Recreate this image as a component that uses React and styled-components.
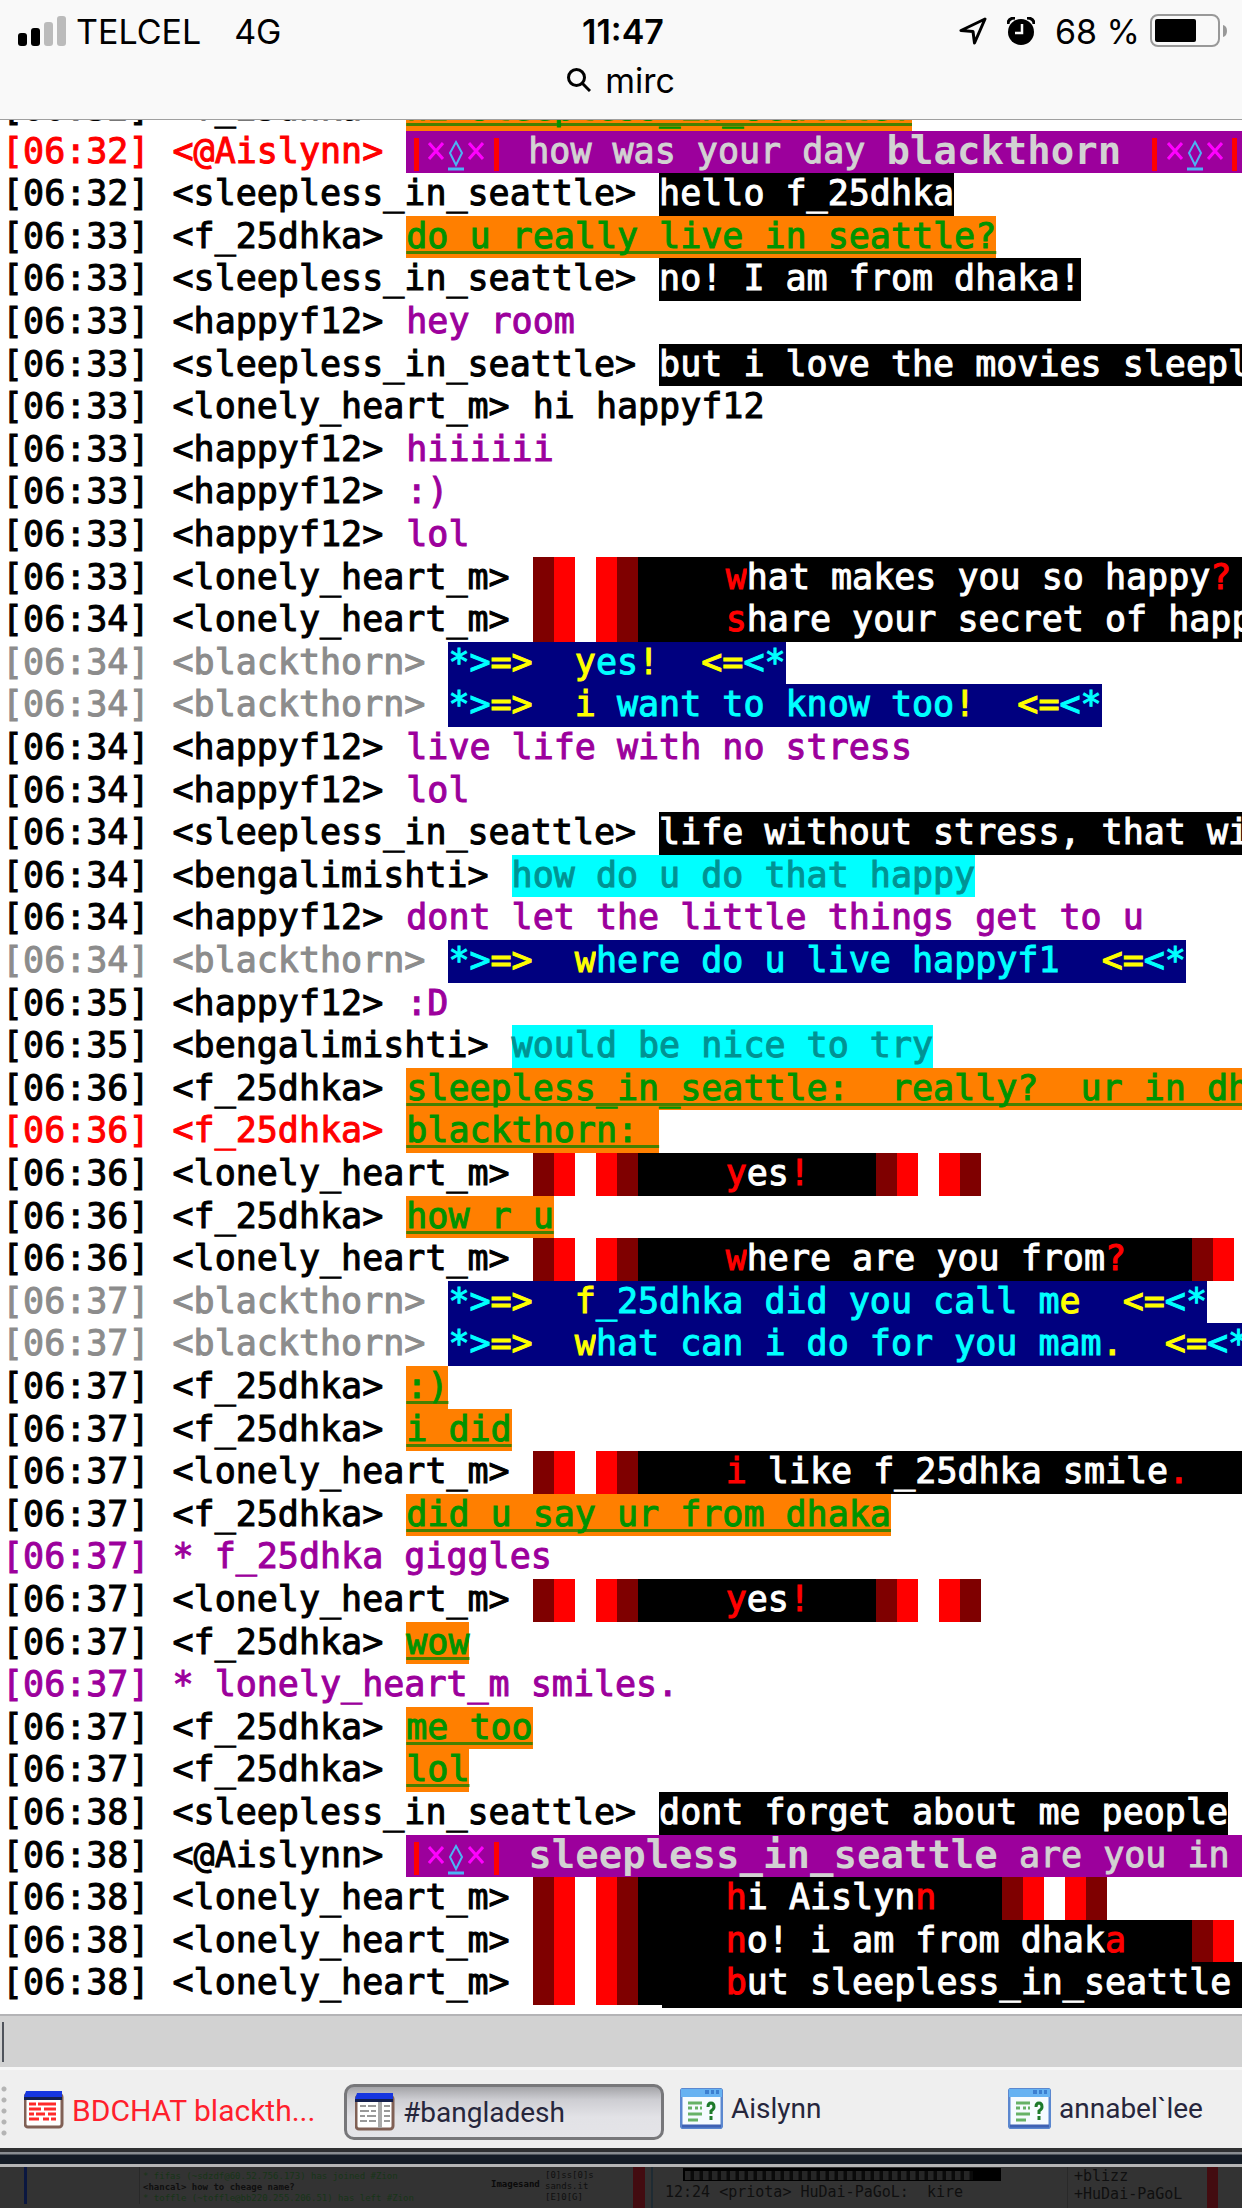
import React from "react";
import styled, { createGlobalStyle, css } from "styled-components";

const GlobalStyle = createGlobalStyle`
  *, *::before, *::after { box-sizing: border-box; }
  body { margin: 0; background: #333333; overflow-x: hidden; }
`;

const uiFont = css`font-family: Inter, "Liberation Sans", sans-serif;`;
const monoFont = css`font-family: "DejaVu Sans Mono", "Liberation Mono", monospace;`;

const Page = styled.main`
  display: flex;
  flex-direction: column;
  width: 100%;
  overflow: hidden;
  background: #ffffff;
`;

const Header = styled.header`
  ${uiFont}
  height: 120px;
  background: #f9f9f9;
  border-bottom: 1px solid #a0a0a0;
  color: #000000;
`;

const StatusBar = styled.div`
  display: grid;
  grid-template-columns: 1fr auto 1fr;
  align-items: center;
  height: 62px;
  padding: 0 14px 0 18px;
  font-size: 34px;
`;

const StatusGroup = styled.div`
  display: flex;
  align-items: center;
  justify-content: ${(p) => (p.$end ? "flex-end" : "flex-start")};
  gap: ${(p) => (p.$end ? "20px" : "9px")};
  white-space: pre;
`;

const Network = styled.span`
  margin-left: 24px;
`;

const Battery = styled.span`
  display: flex;
  align-items: center;
  gap: 10px;
`;

const Clock = styled.time`
  font-weight: 600;
`;

const ReturnLink = styled.a`
  display: flex;
  align-items: center;
  justify-content: center;
  gap: 14px;
  height: 36px;
  font-size: 34px;
  color: #000000;
  text-decoration: none;
`;

const Log = styled.ol`
  ${monoFont}
  list-style: none;
  margin: 0;
  padding: 0 0 0 2px;
  overflow: hidden;
  font-size: 35px;
  line-height: 40px;
  -webkit-text-stroke: 1px currentColor;
`;

const Line = styled.li`
  display: flex;
  height: 43px;
  gap: 23px;
  white-space: pre;
  color: ${(p) => p.$color || "#000000"};
  &:first-child {
    margin-top: -32px;
  }
  &:nth-child(5n + 2),
  &:nth-child(5n + 4) {
    height: 42px;
  }
`;

const Message = styled.span`
  display: flex;
`;

const Run = styled.span`
  flex: none;
  color: ${(p) => p.$color};
  background: ${(p) => p.$bg};
`;

const Underlined = styled(Run)`
  text-decoration: underline 3px #468000;
  text-underline-offset: 3px;
  text-decoration-skip-ink: none;
`;

const Strong = styled.strong`
  flex: none;
  font-size: 39px;
  -webkit-text-stroke: 0;
  color: #d2d2d2;
  background: #9c009c;
`;

const Stripe = styled.span`
  flex: none;
  width: 21px;
  background: ${(p) => p.$color};
`;

const Pad = styled.span`
  flex: none;
  width: ${(p) => p.$width}px;
  background: #000000;
`;

const Ornament = styled.span`
  display: grid;
  flex: none;
  grid-template-columns: repeat(5, 20px);
  justify-items: center;
  padding-right: 22px;
  background: #9c009c;
`;

const Bar = styled.span`
  width: 5px;
  height: 33px;
  margin-top: 7px;
  background: #ff0000;
`;

const NextLine = styled.div`
  height: 9px;
  padding-left: 662px;
  &::before {
    content: "";
    display: block;
    height: 3px;
    background: #000000;
  }
`;

const Composer = styled.label`
  display: flex;
  align-items: center;
  height: 56px;
  border-top: 2px solid #b4b4b6;
  border-bottom: 3px solid #f6f6f6;
  background: #d2d2d2;
`;

const Caret = styled.span`
  width: 2px;
  height: 40px;
  margin-left: 2px;
  background: #50545c;
`;

const Entry = styled.input`
  ${monoFont}
  flex: 1;
  min-width: 0;
  height: 100%;
  padding: 0;
  border: 0;
  outline: 0;
  background: transparent;
  font-size: 35px;
`;

const SwitchBar = styled.nav`
  display: flex;
  height: 78px;
  padding: 14px 0 8px;
  background: #efefef;
`;

const Grip = styled.span`
  flex: none;
  width: 16px;
  height: 52px;
  background: radial-gradient(circle at 4px 5px, #b4b4b4 2px, transparent 3px) 0 0 / 16px 11px repeat-y;
`;

const Tabs = styled.div`
  display: grid;
  flex: none;
  grid-template-columns: repeat(4, 320px);
  gap: 8px;
`;

const Tab = styled.button`
  display: flex;
  align-items: center;
  gap: 8px;
  padding: 0 8px 8px;
  border: 2px solid transparent;
  border-width: 2px 0;
  border-radius: 10px;
  background: transparent;
  font-family: Roboto, "Liberation Sans", sans-serif;
  font-size: 28px;
  color: #26263c;
  text-align: left;
  white-space: nowrap;
  ${(p) => p.$alert && css`
    color: #ff1f2d;
    font-size: 30px;
    padding-bottom: 4px;
  `}
  ${(p) => p.$active && css`
    padding-bottom: 0;
    border: 3px solid #77777a;
    background: linear-gradient(#a4a4a8, #cdcdd2 25%, #e2e2e6 60%, #e4e4e8);
  `}
`;

const WindowEdge = styled.div`
  height: 19px;
  border-top: 4px solid #2f3032;
  border-bottom: 3px solid #b5b5b5;
  background: linear-gradient(#8a8d91 0 2px, #151c26 3px);
`;

const Backdrop = styled.footer`
  ${monoFont}
  display: flex;
  height: 41px;
  overflow: hidden;
  padding-left: 24px;
  background: #333333;
  font-size: 9px;
  line-height: 11px;
  color: #0f0f0f;
  white-space: pre;
`;

const Channel = styled.div`
  flex: none;
  width: 609px;
  height: 37px;
  display: flex;
  border-left: 3px solid #0b1740;
`;

const ChannelLog = styled.div`
  flex: none;
  width: 352px;
  margin-left: 112px;
  padding: 4px 0 0 3px;
  border-left: 1px solid #292929;
  color: #173517;
`;

const Spoken = styled.div`
  color: #0f0f0f;
  font-weight: bold;
`;

const Watermark = styled.div`
  flex: none;
  width: 54px;
  padding-top: 12px;
  color: #0a0a0a;
  font-weight: bold;
`;

const Names = styled.div`
  padding-top: 3px;
`;

const SecondWindow = styled.div`
  display: flex;
  flex: none;
  width: 585px;
  border: solid #430c10;
  border-width: 0 11px 0 12px;
  font-size: 15px;
  line-height: 18px;
`;

const PriotaLog = styled.div`
  flex: none;
  width: 416px;
  padding-left: 12px;
  border-left: 2px solid #1f2b33;
  margin-left: 6px;
`;

const Selection = styled.div`
  width: 318px;
  height: 13px;
  margin: 1px 0 2px 18px;
  background: repeating-linear-gradient(90deg, #262626 0 5px, #0a0a0a 6px 9px) 2px 3px / 288px 9px no-repeat #000000;
`;

const Nicks = styled.div`
  padding-left: 6px;
  border-left: 1px solid #292929;
  flex: 1;
`;

const SignalIcon = () => (
  <svg width="49" height="30" viewBox="0 0 49 30" aria-label="Signal">
    <rect x="0" y="17" width="9" height="13" rx="3" />
    <rect x="13" y="12" width="9" height="18" rx="3" />
    <rect x="26" y="6" width="9" height="24" rx="3" fill="#bbbbbb" />
    <rect x="39" y="0" width="9" height="30" rx="3" fill="#bbbbbb" />
  </svg>
);

const LocationIcon = () => (
  <svg width="28" height="28" viewBox="0 0 28 28" fill="none" stroke="#000" strokeWidth="3" strokeLinejoin="round">
    <path d="M26 2 2 13.500 14 14.500 15.500 26Z" />
  </svg>
);

const AlarmIcon = () => (
  <svg width="28" height="28" viewBox="0 0 28 28">
    <circle cx="14" cy="15" r="13" />
    <path d="M1 7Q1 1 8 1M27 7Q27 1 20 1" fill="none" stroke="#000" strokeWidth="3" />
    <path d="M15 7v9H8" fill="none" stroke="#f9f9f9" strokeWidth="2.500" />
  </svg>
);

const BatteryIcon = () => (
  <svg width="78" height="34" viewBox="0 0 78 34" aria-label="Battery">
    <rect x="1" y="1" width="68" height="31" rx="7" fill="none" stroke="#999" strokeWidth="2" />
    <rect x="5" y="5" width="41" height="23" rx="2" />
    <path d="M73 11q4 1 4 6t-4 6z" fill="#999" />
  </svg>
);

const SearchIcon = () => (
  <svg width="24" height="24" viewBox="0 0 24 24" fill="none" stroke="#000" strokeWidth="3">
    <circle cx="9.500" cy="9.500" r="8" />
    <path d="M15 15l8 8" />
  </svg>
);

const Lozenge = () => (
  <svg width="18" height="40" viewBox="0 0 18 40" fill="none" stroke="#4cb4f4" strokeWidth="2">
    <path d="M9 11 15 22 9 34 3 22Z" />
    <path d="M1 38h16" strokeWidth="3" />
  </svg>
);

const Cross = () => (
  <svg width="16" height="40" viewBox="0 0 16 40" stroke="#ff00ff" strokeWidth="3">
    <path d="M1 12 15 28M15 12 1 28" />
  </svg>
);

const StatusWindowIcon = () => (
  <svg width="40" height="38" viewBox="0 0 40 38">
    <rect x="1" y="3" width="37" height="33" rx="3" fill="#fff" stroke="#806055" strokeWidth="3" />
    <path d="M2 0h36v6H0z" fill="#1636e0" />
    <path d="M0 6h38v3H0z" fill="#14204e" />
    <path d="M5 13h7m2 0h18M5 18h12m3 0h12M5 23h5m2 0h9m3 0h8M5 28h10m4 0h6m2 0h5" stroke="#ff2a2a" strokeWidth="3" />
  </svg>
);

const ChannelWindowIcon = () => (
  <svg width="40" height="38" viewBox="0 0 40 38">
    <rect x="1" y="3" width="37" height="33" rx="3" fill="#fff" stroke="#806055" strokeWidth="3" />
    <path d="M2 0h36v6H0z" fill="#1636e0" />
    <path d="M0 6h38v3H0z" fill="#14204e" />
    <path d="M23 9h4v26h-4z" fill="#aaa" />
    <path d="M5 13h6m2 0h8M5 18h9m2 0h5M5 23h5m2 0h9M5 28h7m2 0h7M29 13h6M29 18h6M29 23h6M29 28h6" stroke="#999" strokeWidth="2" />
  </svg>
);

const QueryWindowIcon = () => (
  <svg width="43" height="41" viewBox="0 0 43 41">
    <rect x="1" y="1" width="41" height="39" rx="3" fill="#f6fbff" stroke="#5b87cf" strokeWidth="3" />
    <path d="M1 1h41v8H1z" fill="#66b2f2" />
    <path d="M25 4h4m2 0h3m2 0h3" stroke="#3c7fd0" strokeWidth="4" />
    <path d="M2 38h39" stroke="#3f62b4" strokeWidth="3" />
    <path d="M8 15h14M8 20h4m3 0h3m2 0h2M8 26h14M8 32h10" stroke="#67b267" strokeWidth="3" />
    <path d="M28 19q0-4 3-4t3 4q0 2-3 4v3M31 28v4" fill="none" stroke="#1d7a2b" strokeWidth="3" />
  </svg>
);

const BLACK = "#000000";
const PURPLE = "#9c009c";
const RED = "#ff0000";
const MAROON = "#7f0000";

const Plain = ({ text, color, bg }) => <Run $color={color} $bg={bg}>{text}</Run>;
const Sleepless = (text) => <Plain text={text} color="#ffffff" bg={BLACK} />;
const Happy = (text) => <Plain text={text} color={PURPLE} />;
const Bengali = (text) => <Plain text={text} color="#009393" bg="#00ffff" />;
const Dhaka = (text) => <Underlined $color="#009300" $bg="#ff7f00">{text}</Underlined>;

const Stripes = ({ colors }) => colors.map((c, i) => <Stripe key={i} $color={c} />);

const Lonely = (first, middle, last) => (
  <>
    <Stripes colors={[MAROON, RED, "#ffffff", RED, MAROON]} />
    <Pad $width={88} />
    <Run $color={RED} $bg={BLACK}>{first}</Run>
    <Run $color="#ffffff" $bg={BLACK}>{middle}</Run>
    <Run $color={RED} $bg={BLACK}>{last}</Run>
    <Pad $width={66} />
    <Stripes colors={[MAROON, RED, "#ffffff", RED, MAROON]} />
  </>
);

const Thorn = (first, middle, last) => (
  <>
    <Run $color="#00ffff" $bg="#00007f">{"*>"}</Run>
    <Run $color="#ffff00" $bg="#00007f">{"=>  " + first}</Run>
    <Run $color="#00ffff" $bg="#00007f">{middle}</Run>
    <Run $color="#ffff00" $bg="#00007f">{last + "  <="}</Run>
    <Run $color="#00ffff" $bg="#00007f">{"<*"}</Run>
  </>
);

const Flourish = () => (
  <Ornament>
    <Bar /><Cross /><Lozenge /><Cross /><Bar />
  </Ornament>
);

const lines = [
  ["06:32", "f_25dhka", Dhaka("hi sleepless_in_seattle!")],
  ["06:32", "@Aislynn", <>
    <Flourish />
    <Plain text="how was your day " color="#d2d2d2" bg={PURPLE} />
    <Strong>blackthorn </Strong>
    <Flourish />
  </>, RED],
  ["06:32", "sleepless_in_seattle", Sleepless("hello f_25dhka")],
  ["06:33", "f_25dhka", Dhaka("do u really live in seattle?")],
  ["06:33", "sleepless_in_seattle", Sleepless("no! I am from dhaka!")],
  ["06:33", "happyf12", Happy("hey room")],
  ["06:33", "sleepless_in_seattle", Sleepless("but i love the movies sleepl")],
  ["06:33", "lonely_heart_m", <Plain text="hi happyf12" color={BLACK} />],
  ["06:33", "happyf12", Happy("hiiiiii")],
  ["06:33", "happyf12", Happy(":)")],
  ["06:33", "happyf12", Happy("lol")],
  ["06:33", "lonely_heart_m", Lonely("w", "hat makes you so happy", "?")],
  ["06:34", "lonely_heart_m", Lonely("s", "hare your secret of happ", "")],
  ["06:34", "blackthorn", Thorn("y", "es", "!"), "#8c8c8c"],
  ["06:34", "blackthorn", Thorn("i", " want to know too", "!"), "#8c8c8c"],
  ["06:34", "happyf12", Happy("live life with no stress")],
  ["06:34", "happyf12", Happy("lol")],
  ["06:34", "sleepless_in_seattle", Sleepless("life without stress, that wi")],
  ["06:34", "bengalimishti", Bengali("how do u do that happy")],
  ["06:34", "happyf12", Happy("dont let the little things get to u")],
  ["06:34", "blackthorn", Thorn("w", "here do u live happyf1", ""), "#8c8c8c"],
  ["06:35", "happyf12", Happy(":D")],
  ["06:35", "bengalimishti", Bengali("would be nice to try")],
  ["06:36", "f_25dhka", Dhaka("sleepless_in_seattle:  really?  ur in dh")],
  ["06:36", "f_25dhka", Dhaka("blackthorn: "), RED],
  ["06:36", "lonely_heart_m", Lonely("y", "es", "!")],
  ["06:36", "f_25dhka", Dhaka("how r u")],
  ["06:36", "lonely_heart_m", Lonely("w", "here are you from", "?")],
  ["06:37", "blackthorn", Thorn("f", "_25dhka did you call m", "e"), "#8c8c8c"],
  ["06:37", "blackthorn", Thorn("w", "hat can i do for you mam", "."), "#8c8c8c"],
  ["06:37", "f_25dhka", Dhaka(":)")],
  ["06:37", "f_25dhka", Dhaka("i did")],
  ["06:37", "lonely_heart_m", Lonely("i", " like f_25dhka smile", ".")],
  ["06:37", "f_25dhka", Dhaka("did u say ur from dhaka")],
  ["06:37", null, "* f_25dhka giggles", PURPLE],
  ["06:37", "lonely_heart_m", Lonely("y", "es", "!")],
  ["06:37", "f_25dhka", Dhaka("wow")],
  ["06:37", null, "* lonely_heart_m smiles.", PURPLE],
  ["06:37", "f_25dhka", Dhaka("me too")],
  ["06:37", "f_25dhka", Dhaka("lol")],
  ["06:38", "sleepless_in_seattle", Sleepless("dont forget about me people")],
  ["06:38", "@Aislynn", <>
    <Flourish />
    <Strong>sleepless_in_seattle</Strong>
    <Plain text=" are you in " color="#d2d2d2" bg={PURPLE} />
  </>],
  ["06:38", "lonely_heart_m", Lonely("h", "i Aislyn", "n")],
  ["06:38", "lonely_heart_m", Lonely("n", "o! i am from dhak", "a")],
  ["06:38", "lonely_heart_m", Lonely("b", "ut sleepless_in_seattle", "")],
];

export default function App() {
  return (
    <>
      <GlobalStyle />
      <Page>
        <Header>
          <StatusBar>
            <StatusGroup>
              <SignalIcon />
              <span>TELCEL</span>
              <Network>4G</Network>
            </StatusGroup>
            <Clock>11:47</Clock>
            <StatusGroup $end>
              <LocationIcon />
              <AlarmIcon />
              <Battery>
                <span>68 %</span>
                <BatteryIcon />
              </Battery>
            </StatusGroup>
          </StatusBar>
          <ReturnLink href="#search">
            <SearchIcon />
            mirc
          </ReturnLink>
        </Header>
        <Log>
          {lines.map(([time, nick, body, color], i) => (
            <Line key={i} $color={color}>
              <span>[{time}]</span>
              {nick && <span>{`<${nick}>`}</span>}
              <Message>{body}</Message>
            </Line>
          ))}
        </Log>
        <NextLine />
        <Composer>
          <Caret />
          <Entry type="text" aria-label="Message" />
        </Composer>
        <SwitchBar>
          <Grip />
          <Tabs>
            <Tab type="button" $alert><StatusWindowIcon />BDCHAT blackth...</Tab>
            <Tab type="button" $active><ChannelWindowIcon />#bangladesh</Tab>
            <Tab type="button"><QueryWindowIcon />Aislynn</Tab>
            <Tab type="button"><QueryWindowIcon />annabel`lee</Tab>
          </Tabs>
        </SwitchBar>
        <WindowEdge />
        <Backdrop>
          <Channel>
            <ChannelLog>
              <div>* fifas (~sdzdf@60.52.756.173) has joined #Zion</div>
              <Spoken>{"<hancal> how to cheage name?"}</Spoken>
              <div>* toffle (~toffle@bb220.255.206.51) has left #Zion</div>
            </ChannelLog>
            <Watermark>Imagesand</Watermark>
            <Names>{"[0]ss[0]s\nsands.it\n[E]0[G]"}</Names>
          </Channel>
          <SecondWindow>
            <PriotaLog>
              <Selection />
              <div>{"12:24 <priota> HuDai-PaGoL:  kire"}</div>
            </PriotaLog>
            <Nicks>{"+blizz\n+HuDai-PaGoL"}</Nicks>
          </SecondWindow>
        </Backdrop>
      </Page>
    </>
  );
}
